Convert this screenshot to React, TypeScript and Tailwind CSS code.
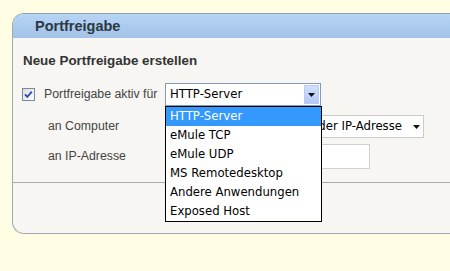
const options = ['HTTP-Server', 'eMule TCP', 'eMule UDP', 'MS Remotedesktop', 'Andere Anwendungen', 'Exposed Host'];

function CheckBox() {
  return (
    <svg width="13" height="13" viewBox="0 0 13 13" className="shrink-0">
      <defs>
        <linearGradient id="cb" x1="0" y1="0" x2="1" y2="1">
          <stop offset="0" stopColor="#dcdcd6" />
          <stop offset="1" stopColor="#ffffff" />
        </linearGradient>
      </defs>
      <rect x="0.5" y="0.5" width="12" height="12" fill="url(#cb)" stroke="#7588a4" />
      <path d="M3 6.3 L5.3 8.8 L9.8 3.6" fill="none" stroke="#2f4fb0" strokeWidth="1.9" />
    </svg>
  );
}

function Triangle() {
  return (
    <svg width="7" height="4" viewBox="0 0 7 4" className="shrink-0">
      <path d="M0 0 H7 L3.5 4 Z" fill="#111" />
    </svg>
  );
}

export default function App() {
  return (
    <div className="h-[271px] w-[450px] overflow-hidden bg-[#fffee4] pl-[12px] pt-[13px] font-['Liberation_Sans',Arial,sans-serif]">
      <div className="flex h-[221px] w-[460px] flex-col overflow-hidden rounded-l-[12px] border border-r-0 border-[#a3aaaf] border-t-[#8e9fae] bg-[#f7f6f2]">
        <div className="h-[24px] shrink-0 bg-gradient-to-b from-[#b6d5f5] to-[#a2c2e7] pl-[22px] text-[14.5px] font-bold leading-[24px] text-[#2b3844]">
          Portfreigabe
        </div>

        <div className="flex flex-col pt-[15px]">
          <div className="pl-[10px] text-[13.4px] font-bold leading-[16px] text-[#333]">Neue Portfreigabe erstellen</div>

          <div className="mt-[14px] flex h-[23px] items-center pl-[9px]">
            <CheckBox />
            <span className="ml-[9px] w-[121px] text-[12.3px] text-[#444]">Portfreigabe aktiv für</span>
            <div className="relative flex h-[23px] w-[156px] items-center border border-[#7f9db9] bg-white pl-[4px] font-['DejaVu_Sans',Tahoma,sans-serif] text-[11.7px] text-black">
              <span className="flex-1">HTTP-Server</span>
              <div className="mr-[1px] flex h-[19px] w-[15px] items-center justify-center border border-[#b9cbf3] bg-gradient-to-b from-[#d2e0fd] to-[#b3c8f4]">
                <Triangle />
              </div>
              <div className="absolute left-[-1px] top-[22px] z-10 w-[157px] border border-black bg-white">
                {options.map((o, i) => (
                  <div
                    key={o}
                    className={i === 0 ? 'h-[19px] bg-[#3399ff] pl-[4px] leading-[19px] text-white' : 'h-[19px] pl-[4px] leading-[19px] text-black'}
                  >
                    {o}
                  </div>
                ))}
              </div>
            </div>
          </div>

          <div className="mt-[9px] flex h-[23px] items-center pl-[35px]">
            <span className="w-[117px] text-[12.3px] text-[#444]">an Computer</span>
            <div className="flex h-[23px] w-[259px] items-center justify-end border border-[#cbcbcb] bg-white pr-[3px] font-['DejaVu_Sans',Tahoma,sans-serif] text-[11.7px] text-black">
              <span className="whitespace-nowrap">manuelle Eingabe der IP-Adresse</span>
              <span className="ml-[11px]">
                <Triangle />
              </span>
            </div>
          </div>

          <div className="mt-[6px] flex h-[25px] items-center pl-[35px]">
            <span className="w-[117px] text-[12.3px] text-[#444]">an IP-Adresse</span>
            <div className="h-[25px] w-[205px] border border-[#d0d0d0] bg-white" />
          </div>

          <div className="mt-[13px] h-[1px] bg-[#a9a9a9]" />
        </div>
      </div>
    </div>
  );
}
